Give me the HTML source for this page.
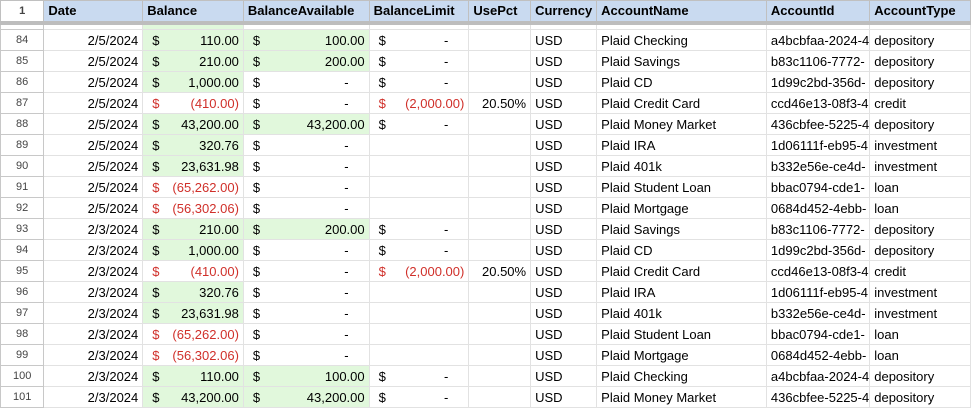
<!DOCTYPE html><html><head><style>
body{margin:0;width:971px;height:408px;overflow:hidden;background:#fff;font-family:"Liberation Sans",Arial,sans-serif;font-size:13px;color:#000}
.w{position:absolute;left:0;top:0}
table{border-collapse:collapse;table-layout:fixed}
td{border:1px solid #e2e2e2;height:21px;padding:0 4px;white-space:nowrap;overflow:hidden;box-sizing:border-box}
tr.h td{height:22px;background:#c9daf0;font-weight:bold;border-color:#c0c0c0;border-bottom:4px solid #bdbdbd}
td.n{text-align:center;font-size:11px;color:#444;background:#fff;border-color:#c8c8c8;padding:0}
tr.h td.n{background:#fff}
.r{text-align:right}
.g{background:#e1f8dc}
.red{color:#d0302a}
.m{display:flex;justify-content:space-between;padding-left:5px}
.sl td{height:7px;padding:0}
</style></head><body><div class="w"><table>
<colgroup><col style="width:44px"><col style="width:100px"><col style="width:101px"><col style="width:126px"><col style="width:100px"><col style="width:62px"><col style="width:64px"><col style="width:171px"><col style="width:102px"><col style="width:101px"></colgroup>
<tr class="h"><td class="n">1</td><td>Date</td><td>Balance</td><td>BalanceAvailable</td><td>BalanceLimit</td><td>UsePct</td><td>Currency</td><td>AccountName</td><td>AccountId</td><td>AccountType</td></tr>
<tr class="sl"><td class="n"></td><td></td><td class="g"></td><td></td><td></td><td></td><td></td><td></td><td></td><td></td></tr>
<tbody id="b"></tbody></table></div>
<script>
const rows=[
[84,"2/5/2024","110.00","100.00","-","","Plaid Checking","a4bcbfaa-2024-4","depository"],
[85,"2/5/2024","210.00","200.00","-","","Plaid Savings","b83c1106-7772-","depository"],
[86,"2/5/2024","1,000.00","-","-","","Plaid CD","1d99c2bd-356d-","depository"],
[87,"2/5/2024","(410.00)","-","(2,000.00)","20.50%","Plaid Credit Card","ccd46e13-08f3-4","credit"],
[88,"2/5/2024","43,200.00","43,200.00","-","","Plaid Money Market","436cbfee-5225-4","depository"],
[89,"2/5/2024","320.76","-",null,"","Plaid IRA","1d06111f-eb95-4","investment"],
[90,"2/5/2024","23,631.98","-",null,"","Plaid 401k","b332e56e-ce4d-","investment"],
[91,"2/5/2024","(65,262.00)","-",null,"","Plaid Student Loan","bbac0794-cde1-","loan"],
[92,"2/5/2024","(56,302.06)","-",null,"","Plaid Mortgage","0684d452-4ebb-","loan"],
[93,"2/3/2024","210.00","200.00","-","","Plaid Savings","b83c1106-7772-","depository"],
[94,"2/3/2024","1,000.00","-","-","","Plaid CD","1d99c2bd-356d-","depository"],
[95,"2/3/2024","(410.00)","-","(2,000.00)","20.50%","Plaid Credit Card","ccd46e13-08f3-4","credit"],
[96,"2/3/2024","320.76","-",null,"","Plaid IRA","1d06111f-eb95-4","investment"],
[97,"2/3/2024","23,631.98","-",null,"","Plaid 401k","b332e56e-ce4d-","investment"],
[98,"2/3/2024","(65,262.00)","-",null,"","Plaid Student Loan","bbac0794-cde1-","loan"],
[99,"2/3/2024","(56,302.06)","-",null,"","Plaid Mortgage","0684d452-4ebb-","loan"],
[100,"2/3/2024","110.00","100.00","-","","Plaid Checking","a4bcbfaa-2024-4","depository"],
[101,"2/3/2024","43,200.00","43,200.00","-","","Plaid Money Market","436cbfee-5225-4","depository"]];
function money(v){if(v===null)return '<td></td>';const neg=v[0]=='(';const pos=!neg&&v!='-';
return `<td class="${neg?'red':''} ${pos?'g':''}"><div class="m"><span>$</span><span style="${v=='-'?'padding-right:16px':''}">${v}</span></div></td>`;}
let h='';for(const r of rows){h+=`<tr><td class="n">${r[0]}</td><td class="r">${r[1]}</td>${money(r[2])}${money(r[3])}${money(r[4])}<td class="r">${r[5]}</td><td>USD</td><td>${r[6]}</td><td style="padding-right:0">${r[7]}</td><td>${r[8]}</td></tr>`}
document.getElementById('b').innerHTML=h;
</script></body></html>
